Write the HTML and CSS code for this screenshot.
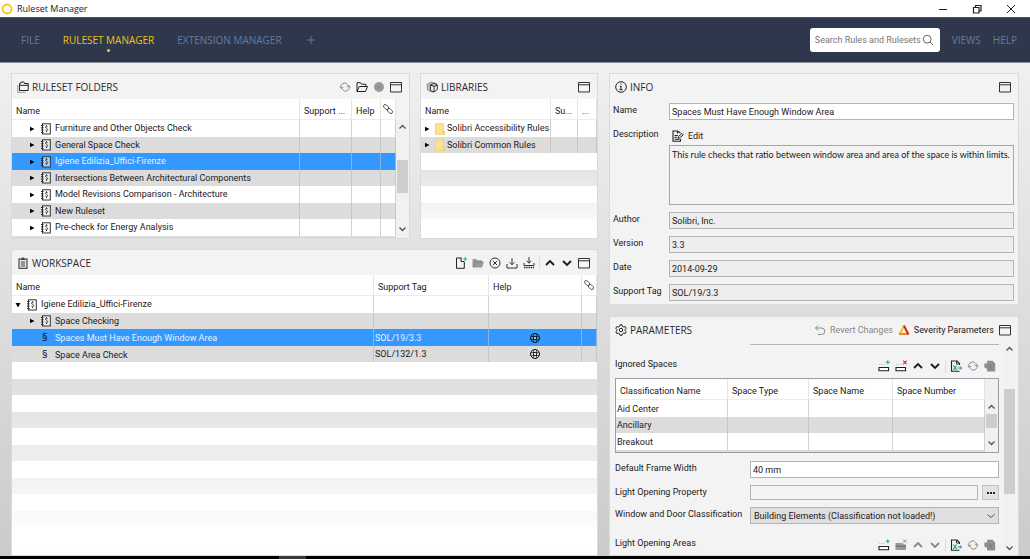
FILE: index.html
```html
<!DOCTYPE html>
<html lang="en">
<head>
<meta charset="utf-8">
<title>Ruleset Manager</title>
<link rel="stylesheet" href="styles.css">
</head>
<body>
<svg class="sprite" aria-hidden="true">
  <symbol id="i-book" viewBox="0 0 12 12"><rect x="2.500" y=".800" width="7.800" height="10.200" fill="#fff" fill-opacity=".6" stroke="#333"/><path d="M1 2.500h2.500M1 4.800h2.500M1 7.100h2.500M1 9.400h2.500" stroke="#222"/><path d="M7.600 3.800c-.6-.8-2.200-.6-2.100.4.1.9 2.200 1.300 2.200 2.400s-1.700 1.100-2.300.3M6.500 2.300v1M6.500 8v1" fill="none" stroke="#222" stroke-width=".9"/></symbol>
  <symbol id="i-window" viewBox="0 0 12 12"><path d="M.5 1.500h11v9.500H.5zM.5 3.800h11" fill="none" stroke="#333"/></symbol>
  <symbol id="i-refresh" viewBox="0 0 12 12"><path d="M2.500 7.500a3.600 3.600 0 0 1 6-4M9.500 4.500a3.600 3.600 0 0 1-6 4M.8 5.800l1.600 1.900 2-1.500M11.200 6.200 9.600 4.300l-2 1.500" fill="none" stroke="currentColor"/></symbol>
  <symbol id="i-folder-open" viewBox="0 0 12 12"><path d="M1 10.500V1.700h3.500l1 1.500h4.300v2M1 10.500l2.200-5h8.300l-2 5z" fill="none" stroke="#222"/></symbol>
  <symbol id="i-folder-grey" viewBox="0 0 12 12"><path d="M.5 10V2h3.800l1 1.300h4.400V5h2L10 10.500H.5z" fill="#999"/><path d="M1.500 10 3 5h8.500" fill="none" stroke="#777" stroke-width=".7"/></symbol>
  <symbol id="i-disc" viewBox="0 0 12 12"><circle cx="6" cy="6" r="5" fill="#999"/><path d="m4 4 4 4M8 4 4 8" stroke="#888"/></symbol>
  <symbol id="i-folders" viewBox="0 0 12 12"><path d="M.7 4v7.300h7.800" fill="none" stroke="#999"/><path d="M2.500 9.500v-7h1l.6-1.500h2.800l.6 1.500h3.700v7zM2.500 4.300h8.700" fill="none" stroke="#222"/></symbol>
  <symbol id="i-cube" viewBox="0 0 12 12"><path d="M1 3.200 5 1l5.500 1.500L11 8l-4.500 3.300L1.500 9z" fill="#bbb" stroke="#777" stroke-width=".7"/><path d="m4.500 4 3.500-1.500L11.300 4v4.500L8 11 4.500 9.500zM4.500 4 8 5.500 11.300 4M8 5.500V11" fill="#f3f3f3" stroke="#222" stroke-width=".9"/></symbol>
  <symbol id="i-clip" viewBox="0 0 12 12"><rect x="2" y="2" width="8" height="9.300" fill="none" stroke="#222"/><path d="M4 2.500h4M4.800 1h2.400M3.800 5h4.400M3.800 7h4.400M3.800 9h4.400" stroke="#222" stroke-width=".9"/></symbol>
  <symbol id="i-info" viewBox="0 0 12 12"><circle cx="6" cy="6" r="5.300" fill="none" stroke="#222"/><path d="M6 5v3.500M4.800 5.200H6M4.500 8.700h3M5.400 3h1.200" stroke="#222" stroke-width="1.100"/></symbol>
  <symbol id="i-gear" viewBox="0 0 12 12"><path d="m5 .8h2l.4 1.500 1.300.7 1.500-.4 1 1.700L10.100 5.400v1.300l1.100 1-1 1.800-1.500-.4-1.300.7L7 11.300H5l-.4-1.500-1.300-.7-1.500.4-1-1.800 1.100-1V5.400L.8 4.300l1-1.700L3.300 3l1.300-.7z" fill="none" stroke="#222"/><circle cx="6" cy="6" r="1.700" fill="none" stroke="#222"/></symbol>
  <symbol id="i-link" viewBox="0 0 12 12"><g fill="none" stroke="#444" stroke-width=".9"><rect x="-2.800" y="-1.700" width="6" height="3.400" rx="1.700" transform="translate(4 4) rotate(45)"/><rect x="-2.800" y="-1.700" width="6" height="3.400" rx="1.700" transform="translate(7.800 7.800) rotate(45)"/></g></symbol>
  <symbol id="i-newfile" viewBox="0 0 12 12"><path d="M6.500 1H1.500v10.300h7.800V5M6 1v3.500h3.300" fill="none" stroke="#222"/><path d="M10.200 0v4M8.200 2h4" stroke="#17b867"/></symbol>
  <symbol id="i-xcircle" viewBox="0 0 12 12"><circle cx="6" cy="6" r="5" fill="none" stroke="#333"/><path d="m4 4 4 4M8 4 4 8" stroke="#333"/></symbol>
  <symbol id="i-down" viewBox="0 0 12 12"><path d="M6 1v6.500M3.500 5.300 6 7.800l2.500-2.500M1 7v4h10V7" fill="none" stroke="#333"/></symbol>
  <symbol id="i-downall" viewBox="0 0 12 12"><path d="M6 0v6M3.700 3.800 6 6.200l2.300-2.400M1 6v2.500h10V6" fill="none" stroke="#333"/><path d="M1 10.500h10" stroke="#333" stroke-width="1.400" stroke-dasharray="1.500 .7"/></symbol>
  <symbol id="i-up" viewBox="0 0 12 12"><path d="m2 8 4-4 4 4" fill="none" stroke="currentColor" stroke-width="1.800"/></symbol>
  <symbol id="i-dn" viewBox="0 0 12 12"><path d="m2 4 4 4 4-4" fill="none" stroke="currentColor" stroke-width="1.800"/></symbol>
  <symbol id="i-thin-dn" viewBox="0 0 12 12"><path d="m2.500 4.500 3.500 3 3.500-3" fill="none" stroke="#555"/></symbol>
  <symbol id="i-ring" viewBox="0 0 12 12"><circle cx="6" cy="6" r="4.500" fill="none" stroke="#111"/><rect x="4.500" y="4.500" width="3" height="3" fill="#fff" fill-opacity=".5" stroke="#111" stroke-width=".9"/><path d="M4.500 2v2.500M7.500 2v2.500M4.500 7.500V10M7.500 7.500V10M2 4.500h2.500M2 7.500h2.500M7.500 4.500H10M7.500 7.500H10" stroke="#111" stroke-width=".6"/></symbol>
  <symbol id="i-edit" viewBox="0 0 12 12"><path d="M8.500 9v2.300H1V1h4.500l3 2M5.500 1v2.500" fill="none" stroke="#222" stroke-width="1.100"/><path d="M2.500 5.500H6M2.500 7.300h2.500M2.500 9.300h5" stroke="#222"/><path d="M6 8.300 6.500 6.500 10 3.500l1.300 1.300-3.500 3z" fill="#fff" stroke="#222"/></symbol>
  <symbol id="i-revert" viewBox="0 0 12 12"><path d="M4 1.500 1.500 4 4 6.500M1.500 4h6a3 3 0 0 1 0 6.500H4" fill="none" stroke="#888"/></symbol>
  <symbol id="i-severity" viewBox="0 0 12 12"><path d="M6 2 1.800 9.800" stroke="#fbc112" stroke-width="2"/><path d="M1 10h9.500" stroke="#f47a1c" stroke-width="1.800"/><path d="m5.800 1.500 4.700 9" stroke="#d8251c" stroke-width="2"/></symbol>
  <symbol id="i-rowadd" viewBox="0 0 12 12"><path d="M1 7.500h9.500v3.300H1z" fill="#fff" stroke="#222" stroke-width="1.100"/><path d="M1 4.500h6" stroke="#ccc" stroke-dasharray="1.500 1"/><path d="M9.800.3v4M7.800 2.300h4" stroke="#17b867" stroke-width="1.100"/></symbol>
  <symbol id="i-rowdel" viewBox="0 0 12 12"><path d="M1 7.500h9.500v3.300H1z" fill="#fff" stroke="#222" stroke-width="1.100"/><path d="M1 4.500h6" stroke="#ccc" stroke-dasharray="1.500 1"/><path d="m8.200.7 3.400 3.400M11.600.7 8.200 4.100" stroke="#e02424" stroke-width="1.100"/></symbol>
  <symbol id="i-rowdel-off" viewBox="0 0 12 12"><path d="M.5 4h7l1 1.500H11V11H.5z" fill="#999"/><path d="M.5 7.200H11" stroke="#666"/><path d="m8.200.7 3 3M11.200.7l-3 3" stroke="#888"/></symbol>
  <symbol id="i-excel" viewBox="0 0 12 12"><path d="M9.500 5V3.500L7 1H1.500v10.300h8" fill="none" stroke="#222" stroke-width="1.100"/><path d="M6.500 1v3h3" fill="none" stroke="#222" stroke-width=".9"/><path d="m3.300 5.500 3.400 4.500M6.700 5.500 3.300 10" stroke="#17a765" stroke-width="1.200"/><path d="M7.500 8h4M10 6.300 11.700 8 10 9.700" fill="none" stroke="#2480d0"/></symbol>
  <symbol id="i-file-off" viewBox="0 0 12 12"><path d="M3 .8h5.500L11.200 3.500v8H3V8.500H1.500L.3 7V3.500H3z" fill="#8f8f8f"/><path d="m5 5 3 4.500M8 5 5 9.500" stroke="#808080"/></symbol>
  <symbol id="i-search" viewBox="0 0 12 12"><circle cx="5.200" cy="5.200" r="3.900" fill="none" stroke="#666"/><path d="m8 8 3.200 3.200" stroke="#666"/></symbol>
  <symbol id="i-libfolder" viewBox="0 0 12 12"><path d="M1.500.3H9.500v8h1.300v3.400H1.500z" fill="#fde28a" stroke="#f0cb5c" stroke-width=".7"/><path d="M9.500 8.300v3" stroke="#e9c04c" stroke-width=".8"/></symbol>
  <symbol id="i-right" viewBox="0 0 12 12"><path d="M4 3.700 8.500 6 4 8.300z"/></symbol>
  <symbol id="i-open" viewBox="0 0 12 12"><path d="M3.500 4h5L6 8.500z"/></symbol>
</svg>

<header class="titlebar">
  <svg class="logo" viewBox="0 0 12 12"><circle cx="6" cy="6" r="4.500" fill="none" stroke="#fdc60b" stroke-width="1.800"/></svg>
  <span>Ruleset Manager</span>
  <div class="win-controls">
    <button aria-label="Minimize"><svg viewBox="0 0 12 12"><path d="M2 6.500h8" stroke="#222"/></svg></button>
    <button aria-label="Restore"><svg viewBox="0 0 12 12"><path d="M2.500 4.500h5.500v5.500H2.500zM4.500 4V2.500H10V8H8.500" fill="none" stroke="#222" stroke-width="1.200"/></svg></button>
    <button aria-label="Close"><svg viewBox="0 0 12 12"><path d="m2 2 8 8M10 2l-8 8" stroke="#222"/></svg></button>
  </div>
</header>

<nav class="menubar">
  <a href="#">FILE</a>
  <a href="#" class="active">RULESET MANAGER</a>
  <a href="#">EXTENSION MANAGER</a>
  <a href="#" class="plus" aria-label="Add view"><svg viewBox="0 0 12 12"><path d="M6 2v8M2 6h8" stroke="currentColor"/></svg></a>
  <div class="search">
    <input type="text" aria-label="Search" placeholder="Search Rules and Rulesets">
    <svg class="icon"><use href="#i-search"/></svg>
  </div>
  <a href="#" class="side">VIEWS</a>
  <a href="#" class="side">HELP</a>
</nav>

<main class="workarea">
  <div class="left">
    <div class="top">
      <section class="panel folders">
        <div class="panel-head">
          <svg class="icon"><use href="#i-folders"/></svg><h2>RULESET FOLDERS</h2>
          <div class="tools">
            <button class="off" aria-label="Refresh"><svg class="icon"><use href="#i-refresh"/></svg></button>
            <button aria-label="Open folder"><svg class="icon"><use href="#i-folder-open"/></svg></button>
            <button aria-label="Remove"><svg class="icon"><use href="#i-disc"/></svg></button>
            <button aria-label="Maximize"><svg class="icon"><use href="#i-window"/></svg></button>
          </div>
        </div>
        <div class="scroller">
          <table class="grid">
            <colgroup><col><col class="w-support"><col class="w-help"><col class="w-link"></colgroup>
            <thead><tr><th>Name</th><th>Support ...</th><th>Help</th><th class="pic"><svg class="icon"><use href="#i-link"/></svg></th></tr></thead>
            <tbody>
              <tr><td class="lv1"><svg class="icon"><use href="#i-right"/></svg><svg class="icon"><use href="#i-book"/></svg>Furniture and Other Objects Check</td><td></td><td></td><td></td></tr>
              <tr><td class="lv1"><svg class="icon"><use href="#i-right"/></svg><svg class="icon"><use href="#i-book"/></svg>General Space Check</td><td></td><td></td><td></td></tr>
              <tr class="selected"><td class="lv1"><svg class="icon"><use href="#i-right"/></svg><svg class="icon"><use href="#i-book"/></svg>Igiene Edilizia_Uffici-Firenze</td><td></td><td></td><td></td></tr>
              <tr><td class="lv1"><svg class="icon"><use href="#i-right"/></svg><svg class="icon"><use href="#i-book"/></svg>Intersections Between Architectural Components</td><td></td><td></td><td></td></tr>
              <tr><td class="lv1"><svg class="icon"><use href="#i-right"/></svg><svg class="icon"><use href="#i-book"/></svg>Model Revisions Comparison - Architecture</td><td></td><td></td><td></td></tr>
              <tr><td class="lv1"><svg class="icon"><use href="#i-right"/></svg><svg class="icon"><use href="#i-book"/></svg>New Ruleset</td><td></td><td></td><td></td></tr>
              <tr><td class="lv1"><svg class="icon"><use href="#i-right"/></svg><svg class="icon"><use href="#i-book"/></svg>Pre-check for Energy Analysis</td><td></td><td></td><td></td></tr>
            </tbody>
          </table>
          <div class="bar below-head"><svg class="icon"><use href="#i-up"/></svg><i class="thumb mid"></i><svg class="icon"><use href="#i-dn"/></svg></div>
        </div>
        <div class="cut"></div>
      </section>

      <section class="panel libraries">
        <div class="panel-head">
          <svg class="icon"><use href="#i-cube"/></svg><h2>LIBRARIES</h2>
          <div class="tools"><button aria-label="Maximize"><svg class="icon"><use href="#i-window"/></svg></button></div>
        </div>
        <table class="grid">
          <colgroup><col><col class="w-su"><col class="w-dots"></colgroup>
          <thead><tr><th>Name</th><th>Su...</th><th>...</th></tr></thead>
          <tbody>
            <tr><td class="lib"><svg class="icon"><use href="#i-right"/></svg><svg class="icon"><use href="#i-libfolder"/></svg>Solibri Accessibility Rules</td><td></td><td></td></tr>
            <tr><td class="lib"><svg class="icon"><use href="#i-right"/></svg><svg class="icon"><use href="#i-libfolder"/></svg>Solibri Common Rules</td><td></td><td></td></tr>
          </tbody>
        </table>
        <div class="stripes"></div>
      </section>
    </div>

    <section class="panel workspace">
      <div class="panel-head">
        <svg class="icon"><use href="#i-clip"/></svg><h2>WORKSPACE</h2>
        <div class="tools">
          <button aria-label="New ruleset"><svg class="icon"><use href="#i-newfile"/></svg></button>
          <button aria-label="Open"><svg class="icon"><use href="#i-folder-grey"/></svg></button>
          <button aria-label="Close"><svg class="icon"><use href="#i-xcircle"/></svg></button>
          <button aria-label="Save"><svg class="icon"><use href="#i-down"/></svg></button>
          <button aria-label="Save all"><svg class="icon"><use href="#i-downall"/></svg></button>
          <span class="sep"></span>
          <button aria-label="Move up"><svg class="icon"><use href="#i-up"/></svg></button>
          <button aria-label="Move down"><svg class="icon"><use href="#i-dn"/></svg></button>
          <button aria-label="Maximize"><svg class="icon"><use href="#i-window"/></svg></button>
        </div>
      </div>
      <table class="grid">
        <colgroup><col><col class="w-tag"><col class="w-helpwide"><col class="w-link"></colgroup>
        <thead><tr><th>Name</th><th>Support Tag</th><th>Help</th><th class="pic"><svg class="icon"><use href="#i-link"/></svg></th></tr></thead>
        <tbody>
          <tr><td class="lv0"><svg class="icon"><use href="#i-open"/></svg><svg class="icon"><use href="#i-book"/></svg>Igiene Edilizia_Uffici-Firenze</td><td></td><td></td><td></td></tr>
          <tr><td class="lv1"><svg class="icon"><use href="#i-right"/></svg><svg class="icon"><use href="#i-book"/></svg>Space Checking</td><td></td><td></td><td></td></tr>
          <tr class="selected"><td class="lv2"><span class="rule">§</span>Spaces Must Have Enough Window Area</td><td>SOL/19/3.3</td><td class="pic"><svg class="icon"><use href="#i-ring"/></svg></td><td></td></tr>
          <tr><td class="lv2"><span class="rule">§</span>Space Area Check</td><td>SOL/132/1.3</td><td class="pic"><svg class="icon"><use href="#i-ring"/></svg></td><td></td></tr>
        </tbody>
      </table>
      <div class="stripes"></div>
    </section>
  </div>

  <div class="right">
    <section class="panel">
      <div class="panel-head">
        <svg class="icon"><use href="#i-info"/></svg><h2>INFO</h2>
        <div class="tools"><button aria-label="Maximize"><svg class="icon"><use href="#i-window"/></svg></button></div>
      </div>
      <div class="info-form">
        <label for="name">Name</label><input id="name" type="text" value="Spaces Must Have Enough Window Area">
        <label for="desc">Description</label>
        <div class="desc">
          <button class="edit"><svg class="icon"><use href="#i-edit"/></svg>Edit</button>
          <textarea id="desc" readonly>This rule checks that ratio between window area and area of the space is within limits.</textarea>
        </div>
        <label for="author">Author</label><input id="author" type="text" readonly value="Solibri, Inc.">
        <label for="version">Version</label><input id="version" type="text" readonly value="3.3">
        <label for="date">Date</label><input id="date" type="text" readonly value="2014-09-29">
        <label for="tag">Support Tag</label><input id="tag" type="text" readonly value="SOL/19/3.3">
      </div>
    </section>

    <section class="panel params">
      <div class="panel-head">
        <svg class="icon"><use href="#i-gear"/></svg><h2>PARAMETERS</h2>
        <div class="tools">
          <button class="off"><svg class="icon"><use href="#i-revert"/></svg>Revert Changes</button>
          <button><svg class="icon"><use href="#i-severity"/></svg>Severity Parameters</button>
          <button aria-label="Maximize"><svg class="icon"><use href="#i-window"/></svg></button>
        </div>
      </div>
      <div class="params-body">
        <div class="params-content">
          <div class="prev"></div>
          <div class="group-head">
            <span>Ignored Spaces</span>
            <div class="tools">
              <button aria-label="Add row"><svg class="icon"><use href="#i-rowadd"/></svg></button>
              <button aria-label="Delete row"><svg class="icon"><use href="#i-rowdel"/></svg></button>
              <button aria-label="Move up"><svg class="icon"><use href="#i-up"/></svg></button>
              <button aria-label="Move down"><svg class="icon"><use href="#i-dn"/></svg></button>
              <span class="sep"></span>
              <button aria-label="Export"><svg class="icon"><use href="#i-excel"/></svg></button>
              <button class="off" aria-label="Refresh"><svg class="icon"><use href="#i-refresh"/></svg></button>
              <button aria-label="Import"><svg class="icon"><use href="#i-file-off"/></svg></button>
            </div>
          </div>
          <div class="spaces">
            <div class="scroller">
              <table class="grid">
                <colgroup><col><col class="w-type"><col class="w-sname"><col class="w-number"></colgroup>
                <thead><tr><th>Classification Name</th><th>Space Type</th><th>Space Name</th><th>Space Number</th></tr></thead>
                <tbody>
                  <tr><td>Aid Center</td><td></td><td></td><td></td></tr>
                  <tr><td>Ancillary</td><td></td><td></td><td></td></tr>
                  <tr><td>Breakout</td><td></td><td></td><td></td></tr>
                </tbody>
              </table>
              <div class="bar below-head"><svg class="icon"><use href="#i-up"/></svg><i class="thumb small"></i><svg class="icon"><use href="#i-dn"/></svg></div>
            </div>
            <div class="cut"></div>
          </div>
          <div class="param-form">
            <label for="frame">Default Frame Width</label><input id="frame" type="text" value="40 mm">
            <label for="prop">Light Opening Property</label>
            <div class="with-button"><input id="prop" class="flat" type="text" readonly><button class="more" aria-label="Choose"><i></i><i></i><i></i></button></div>
            <label for="cls">Window and Door Classification</label>
            <div class="select"><select id="cls"><option>Building Elements (Classification not loaded!)</option></select><svg class="icon"><use href="#i-thin-dn"/></svg></div>
          </div>
          <div class="group-head">
            <span>Light Opening Areas</span>
            <div class="tools">
              <button aria-label="Add row"><svg class="icon"><use href="#i-rowadd"/></svg></button>
              <button aria-label="Delete row"><svg class="icon"><use href="#i-rowdel-off"/></svg></button>
              <button class="off" aria-label="Move up"><svg class="icon"><use href="#i-up"/></svg></button>
              <button class="off" aria-label="Move down"><svg class="icon"><use href="#i-dn"/></svg></button>
              <span class="sep"></span>
              <button aria-label="Export"><svg class="icon"><use href="#i-excel"/></svg></button>
              <button class="off" aria-label="Refresh"><svg class="icon"><use href="#i-refresh"/></svg></button>
              <button aria-label="Import"><svg class="icon"><use href="#i-file-off"/></svg></button>
            </div>
          </div>
        </div>
        <div class="bar"><svg class="icon"><use href="#i-up"/></svg><i class="thumb long"></i><svg class="icon"><use href="#i-dn"/></svg></div>
      </div>
    </section>
  </div>
</main>
<footer class="taskbar"><span></span></footer>
</body>
</html>
```

FILE: styles.css
```css
* { box-sizing: border-box; }
html, body { margin: 0; height: 100%; }
body {
  display: flex; flex-direction: column; min-height: 100vh; overflow: hidden;
  font-family: Roboto, "Open Sans", sans-serif; font-size: 9px; line-height: 12px; color: #1c1820;
}
.sprite { display: none; }
svg { display: block; }
.icon { width: 12px; height: 12px; flex: none; overflow: visible; }
button { display: flex; align-items: center; gap: 4px; border: 0; padding: 0; background: none; font: inherit; color: inherit; }
input, textarea, select { font: inherit; color: inherit; min-width: 0; margin: 0; border-radius: 0; outline: 0; }

.titlebar { display: flex; align-items: center; height: 17px; padding: 0 13px 0 1px; gap: 4px; background: #fff; }
.logo { width: 12px; height: 12px; }
.win-controls { display: flex; gap: 22px; margin-left: auto; }
.win-controls svg { width: 12px; height: 12px; }

.menubar {
  display: flex; align-items: center; height: 46px; padding: 0 13px 0 21px; gap: 23px;
  background: #2f374d; border-top: 1px solid #4b5060; border-bottom: 1px solid #8a8e99;
}
.menubar, h2 { font-family: "Open Sans", "Noto Sans", sans-serif; font-size: 10px; }
.titlebar span { font-family: "Open Sans", "Noto Sans", sans-serif; }
.menubar a { position: relative; color: #627c9c; text-decoration: none; }
.menubar a.active { color: #efc312; }
.menubar a.active::after {
  content: ""; position: absolute; left: 50%; top: 15px; width: 3px; height: 3px; margin-left: -2px;
  border-radius: 50%; background: #ffd21a;
}
.plus svg { width: 12px; height: 12px; }
.search {
  display: flex; align-items: center; gap: 1px; width: 130px; height: 24px; padding: 0 6px 0 5px;
  margin-left: auto; background: #fff; border-radius: 3px;
}
.search input { flex: 1; border: 0; padding: 0; background: none; font-family: Roboto, sans-serif; font-size: 9px; }
.search input::placeholder { color: #777; opacity: 1; }
.menubar .side { margin-left: -11px; }

.workarea {
  flex: 1; min-height: 0; display: grid; grid-template-columns: 587fr 410fr; gap: 11px; padding: 10px 11px 0;
  background: linear-gradient(#f0f0f0, #cbcbcb);
}
.left, .right { display: flex; flex-direction: column; gap: 11px; min-height: 0; min-width: 0; }
.left { gap: 10px; }
.top { display: grid; grid-template-columns: 399fr 178fr; gap: 10px; }
.panel { display: flex; flex-direction: column; min-width: 0; background: #f3f3f3; border: 1px solid #dadada; }
.workspace, .params { flex: 1; min-height: 0; overflow: hidden; }
.panel-head { display: flex; align-items: center; flex: none; gap: 3px; height: 25px; padding: 0 7px 0 5px; }
h2 { margin: 0; font-weight: 400; color: #2c2830; }
.tools { display: flex; align-items: center; gap: 5px; margin-left: auto; }
.off { color: #888; }
.sep { width: 1px; height: 13px; margin: 0 -1px; background: #ddd; }

.grid { width: 100%; table-layout: fixed; border-collapse: separate; border-spacing: 0; }
.w-support { width: 52px; }
.w-help { width: 29px; }
.w-link { width: 15px; }
.w-su { width: 27px; }
.w-dots { width: 19px; }
.w-tag { width: 115px; }
.w-helpwide { width: 93px; }
.w-type { width: 81px; }
.w-sname { width: 84px; }
.w-number { width: 92px; }
.grid th {
  height: 21px; padding: 3px 3px 0 4px; text-align: left; font-weight: 400; white-space: nowrap; background: #fff;
  border-right: 1px solid #e4e4e4; border-bottom: 1px solid #ececec;
}
.grid td {
  height: 17px; padding: 0 1px; white-space: nowrap; overflow: hidden; background: #fff; border-right: 1px solid #d0d0d0;
}
.grid tr:nth-child(even) td { height: 16px; background: #dcdcdc; border-color: #c6c6c6; }
.grid tr.selected td { background: #3399ff; border-color: #8ab4e0; color: #e4f1ff; }
.grid .pic { padding: 0; }
.grid .pic .icon { margin: 0 auto; }
.lv0 .icon, .lv1 .icon, .lib .icon { display: inline-block; vertical-align: middle; margin-right: 2px; }
.lv0 .icon + .icon, .lv1 .icon + .icon { margin-right: 3px; }
.grid .lv0 { padding-left: 0; }
.grid .lv1 { padding-left: 14px; }
.grid .lv2 { padding-left: 29px; }
.grid .lib { padding: 0; }
.grid .lib .icon { margin-right: 1px; }
.rule { display: inline-block; width: 14px; font-family: "Open Sans", sans-serif; font-size: 11px; line-height: 12px; padding-left: 1px; color: #111; }
.scroller { display: flex; }
.bar { display: flex; flex-direction: column; align-items: center; flex: none; width: 13px; background: #f1f1f1; color: #555; }
.bar.below-head { margin-top: 21px; }
.bar .icon { width: 9px; height: 14px; }
.thumb { width: 11px; background: #cdcdcd; }
.thumb.mid { height: 33px; margin: 26px 0 auto; }
.thumb.small { height: 14px; margin: 0 0 auto; }
.thumb.long { height: 105px; margin: 33px 0 auto; }
.cut { height: 2px; margin-right: 13px; background: #dcdcdc; }
.stripes {
  flex: 1; min-height: 0;
  background: linear-gradient(rgba(255, 255, 255, 0), #fff 95%), repeating-linear-gradient(#fff 0 17px, #dcdcdc 17px 33px);
}

.info-form { display: grid; grid-template-columns: 52px 1fr; gap: 7px 4px; padding: 4px 4px 3px 3px; }
.info-form label, .param-form label { padding-top: 1px; white-space: nowrap; }
input[type="text"] { width: 100%; }
.info-form input, .param-form input { height: 17px; padding: 0 2px; background: #fff; border: 1px solid #b4b4b8; }
.info-form input[readonly] { background: #eee; }
.param-form input.flat { height: 15px; background: #f3f3f3; }
.desc { display: flex; flex-direction: column; }
.edit { height: 18px; padding-left: 3px; }
.desc textarea {
  height: 60px; padding: 3px 1px 3px 2px; resize: none; overflow: hidden;
  font-family: Lato, sans-serif; background: #f3f3f3; border: 1px solid #a4a6b0;
}

.params-body { flex: 1; min-height: 0; display: flex; gap: 4px; padding: 0 2px 0 5px; }
.params-content { flex: 1; min-width: 0; }
.prev { height: 3px; margin-left: 135px; border-bottom: 1px solid #b4b4b8; }
.group-head { display: flex; align-items: center; height: 33px; padding: 9px 3px 0 0; }
.group-head > span { padding-bottom: 4px; }
.spaces { border: 1px solid #9a9ca6; background: #f0f0f0; }
.param-form { display: grid; grid-template-columns: 131px 1fr; gap: 7px 4px; padding-top: 8px; }
.with-button { display: flex; gap: 4px; }
.more { justify-content: center; gap: 1px; width: 17px; height: 15px; flex: none; border: 1px solid #c4c4c4; background: #e2e2e2; }
.more i { width: 2px; height: 2px; background: #222; }
.select { position: relative; }
.select select { width: 100%; height: 17px; padding: 0 3px; appearance: none; background: #dfdfdf; border: 1px solid #b4b4b8; }
.select .icon { position: absolute; right: 2px; top: 3px; pointer-events: none; }

.taskbar { flex: none; height: 3px; padding-left: 279px; background: #000; }
.taskbar span { display: block; width: 27px; height: 3px; background: #3a3a3a; }
```
